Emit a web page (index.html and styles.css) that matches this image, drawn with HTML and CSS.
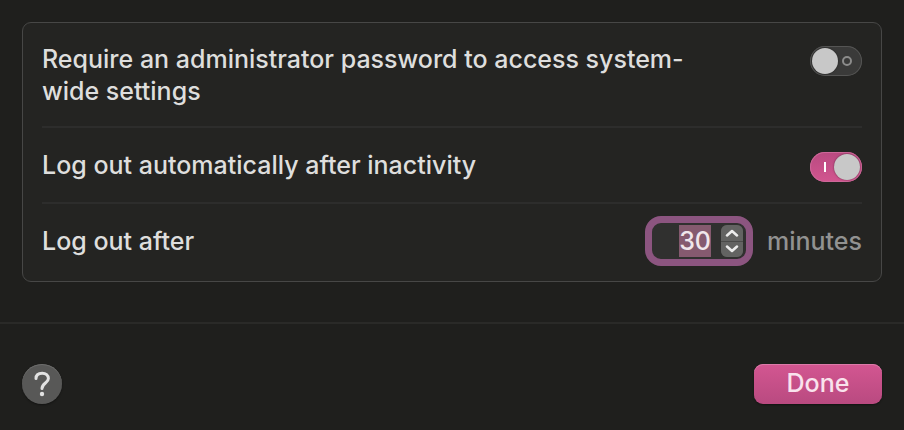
FILE: index.html
```html
<!DOCTYPE html>
<html lang="en">

<head>
  <meta charset="UTF-8" />
  <meta name="viewport" content="width=device-width,initial-scale=1.0" />
  <title>Advanced</title>
  <link rel="stylesheet" href="styles.css">
</head>

<body>
  <form class="sheet">
    <div class="content">
      <div class="group">
        <div class="row">
          <label class="text" for="admin">Require an administrator password to access system-wide settings</label>
          <input class="switch" type="checkbox" id="admin" name="admin">
        </div>
        <div class="row">
          <label class="text" for="logout">Log out automatically after inactivity</label>
          <input class="switch" type="checkbox" id="logout" name="logout" checked>
        </div>
        <div class="row">
          <label class="text" for="minutes">Log out after</label>
          <div class="field">
            <input class="number" type="text" id="minutes" name="minutes" value="30">
            <div class="stepper">
              <button type="button" id="up" aria-label="Increase">
                <svg width="14" height="8" viewBox="0 0 14 8"><path d="M2 6.5 L7 2 L12 6.5" /></svg>
              </button>
              <button type="button" id="down" aria-label="Decrease">
                <svg width="14" height="8" viewBox="0 0 14 8"><path d="M2 1.5 L7 6 L12 1.5" /></svg>
              </button>
            </div>
          </div>
          <span class="unit">minutes</span>
        </div>
      </div>
    </div>

    <div class="footer">
      <button type="button" class="help" aria-label="Help">
        <svg width="20" height="28" viewBox="0 0 20 28">
          <path d="M4 8.5 C4 5 6.5 3.2 10.2 3.2 C13.8 3.2 16.4 5.2 16.4 8.6 C16.4 13.2 10 13 10 18.6" />
          <circle cx="10" cy="24" r="2.2" />
        </svg>
      </button>
      <button type="submit" class="done">Done</button>
    </div>
  </form>

  <script>
    var minutes = document.getElementById('minutes');
    function step(n) {
      minutes.value = Math.max(1, Number(minutes.value) + n);
      minutes.select();
    }
    document.getElementById('up').addEventListener('click', function () { step(1); });
    document.getElementById('down').addEventListener('click', function () { step(-1); });
    minutes.focus();
    minutes.select();
  </script>
</body>

</html>
```

FILE: styles.css
```css
* {
  box-sizing: border-box;
}

body {
  margin: 0;
  background-color: #1f1f1d;
  color: #dededd;
  font-family: Inter, "Liberation Sans", sans-serif;
  font-size: 25px;
  font-weight: 500;
  line-height: 32px;
}

input,
button {
  margin: 0;
  padding: 0;
  border: none;
  outline: none;
  font: inherit;
  color: inherit;
}

.content {
  padding: 22px 22px 40px;
}

.group {
  padding: 0 19px;
  border: 1px solid #474746;
  border-radius: 9px;
  background-color: #242422;
}

.row {
  display: flex;
  align-items: flex-start;
  padding: 20px 0 19px;
}

.row + .row {
  padding: 21px 0 20px;
  border-top: 2px solid #2d2d2c;
}

.row:last-child {
  padding-bottom: 24px;
}

.text {
  flex: 1;
  padding-right: 96px;
}

/* switch */
.switch {
  appearance: none;
  display: flex;
  align-items: center;
  justify-content: space-between;
  flex: none;
  width: 52px;
  height: 30px;
  margin-top: 3px;
  padding: 0 10px 0 2px;
  border-radius: 15px;
  background-color: #3a3a39;
  box-shadow: inset 0 0 0 1px #555554;
}

.switch::before {
  content: "";
  width: 26px;
  height: 26px;
  border-radius: 50%;
  background-color: #c8c8c8;
  box-shadow: 0 0 2px rgba(0, 0, 0, 0.5);
}

.switch::after {
  content: "";
  box-sizing: border-box;
  width: 10px;
  height: 10px;
  border: 2px solid #8c8c8b;
  border-radius: 50%;
}

.switch:checked {
  flex-direction: row-reverse;
  padding: 0 2px 0 14px;
  background: linear-gradient(#b94a80, #d2558f);
  box-shadow: inset 0 0 0 1px #cd6899;
}

.switch:checked::after {
  width: 2px;
  border: none;
  border-radius: 0;
  background-color: #fff;
}

/* number field */
.field {
  display: flex;
  width: 108px;
  height: 50px;
  margin: -9px 14px -9px 0;
  padding: 2px 3px 2px 0;
  border: 7px solid #8c5580;
  border-radius: 16px;
  background-color: #30302f;
}

.number {
  flex: 1;
  min-width: 0;
  height: 32px;
  margin-right: 10px;
  background: none;
  text-align: right;
}

.number::selection {
  background-color: #855a6f;
  color: #f0e6eb;
}

.stepper {
  display: flex;
  flex-direction: column;
  gap: 1px;
  width: 22px;
  border-radius: 6px;
  overflow: hidden;
  background-color: #4a4a49;
}

.stepper button {
  display: flex;
  flex: 1;
  align-items: center;
  justify-content: center;
  background-color: #636362;
}

.stepper path {
  fill: none;
  stroke: #ececec;
  stroke-width: 2.5;
  stroke-linecap: round;
  stroke-linejoin: round;
}

.unit {
  color: #929291;
}

/* footer */
.footer {
  display: flex;
  justify-content: space-between;
  padding: 40px 22px 26px;
  border-top: 2px solid #2a2a28;
}

.help {
  display: flex;
  align-items: center;
  justify-content: center;
  width: 40px;
  height: 40px;
  border-radius: 50%;
  background-color: #585857;
  box-shadow: inset 0 1px 0 #6c6c6b, 0 1px 2px rgba(0, 0, 0, 0.4);
}

.help path {
  fill: none;
  stroke: #e2e2e2;
  stroke-width: 3;
  stroke-linecap: round;
}

.help circle {
  fill: #e2e2e2;
}

.done {
  width: 128px;
  height: 40px;
  padding-bottom: 2px;
  border-radius: 9px;
  background: linear-gradient(#d35691, #b94a80);
  box-shadow: inset 0 1px 0 #dc7ba9, 0 1px 2px rgba(0, 0, 0, 0.4);
  color: #f9e3ed;
}
```
